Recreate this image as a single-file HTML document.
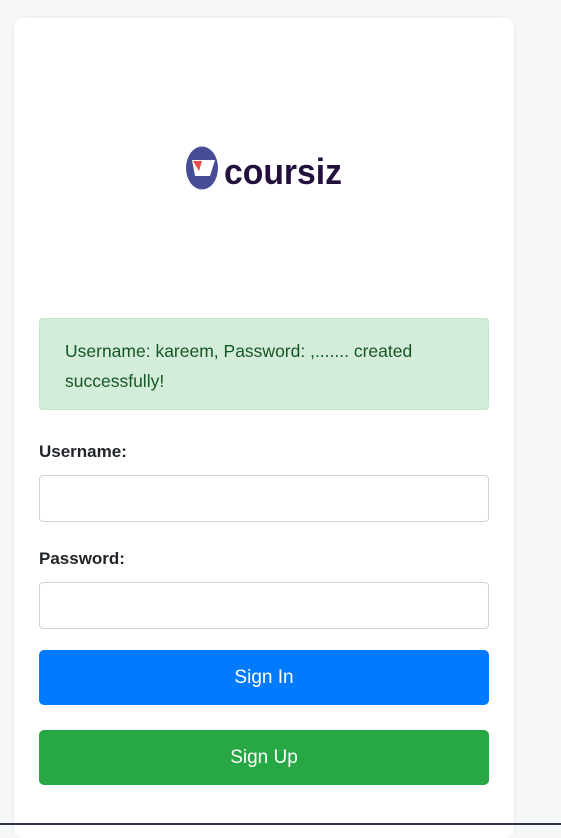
<!DOCTYPE html>
<html><head><style>
body{margin:0;width:561px;height:825px;background:#f6f7f9;font-family:"Liberation Sans",sans-serif;position:relative;overflow:hidden}
.card{position:absolute;left:14px;top:18px;width:500px;height:820px;background:#fff;border-radius:8px;box-shadow:0 0 6px rgba(0,0,0,.06)}
.logo{position:absolute;left:172px;top:127px}
.alert{position:absolute;background:#d4edda;border:1px solid #c3e6cb;border-radius:4px;color:#155724;font-size:17.5px;line-height:30px;padding:17px 24px 0 25px;box-sizing:border-box}
label{position:absolute;left:25px;font-weight:bold;font-size:17px;color:#212529}
.inp{position:absolute;left:25px;width:450px;height:47px;border:1px solid #ced4da;border-radius:4px;box-sizing:border-box}
.btn{position:absolute;left:25px;width:450px;height:55px;border-radius:5px;color:#fff;font-size:19px;text-align:center;line-height:55px}
.line{position:absolute;left:0;bottom:0;width:561px;height:2px;background:#2c3447}
</style></head><body>
<div class="card">
<svg class="logo" width="160" height="46" viewBox="0 0 160 46">
<ellipse cx="16" cy="23" rx="16" ry="21.5" fill="#474c97"/>
<path d="M6 15 L29 15 L24 31 L9 31 Z" fill="#fff"/>
<path d="M7 16 L16 16 L13 26 Z" fill="#e94b4b"/>
<text x="38" y="39" font-family="Liberation Sans,sans-serif" font-weight="bold" font-size="36" fill="#24103c" textLength="118" lengthAdjust="spacingAndGlyphs">coursiz</text>
</svg>
<div class="alert" style="top:300px;left:25px;width:450px;height:92px">Username: kareem, Password: ,....... created successfully!</div>
<label style="top:424px">Username:</label>
<div class="inp" style="top:457px"></div>
<label style="top:531px">Password:</label>
<div class="inp" style="top:564px"></div>
<div class="btn" style="top:632px;background:#007bff">Sign In</div>
<div class="btn" style="top:712px;background:#28a745">Sign Up</div>
</div>
<div class="line"></div>
</body></html>
